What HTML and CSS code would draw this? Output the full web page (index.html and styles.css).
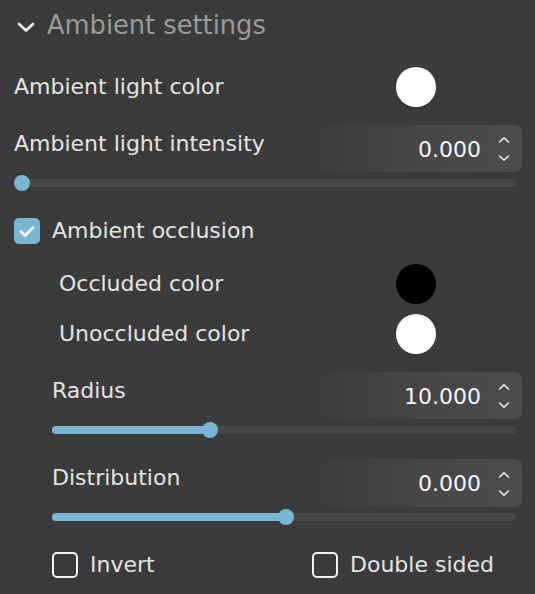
FILE: index.html
```html
<!DOCTYPE html>
<html>
<head>
<meta charset="utf-8">
<link rel="stylesheet" href="styles.css">
</head>
<body>
<div class="panel">
  <div class="header">
    <svg class="chev" width="18" height="12" viewBox="0 0 18 12"><path d="M2 3 L9 9.5 L16 3" fill="none" stroke="#ececec" stroke-width="2.8" stroke-linecap="round" stroke-linejoin="round"/></svg>
    <span class="title">Ambient settings</span>
  </div>

  <div class="color-row top-row">
    <span class="label">Ambient light color</span>
    <span class="swatch white"></span>
  </div>

  <div class="num-row">
    <span class="label">Ambient light intensity</span>
    <div class="numbox">
      <span class="value">0.000</span>
      <span class="spin">
        <svg width="12" height="26" viewBox="0 0 12 26"><path d="M1.5 6 L6 1.8 L10.5 6" fill="none" stroke="#e6e6e6" stroke-width="1.6" stroke-linecap="round" stroke-linejoin="round"/><path d="M1.5 20 L6 24.2 L10.5 20" fill="none" stroke="#e6e6e6" stroke-width="1.6" stroke-linecap="round" stroke-linejoin="round"/></svg>
      </span>
    </div>
  </div>
  <div class="slider"><div class="fill" style="width:0%"></div><div class="thumb" style="left:0%"></div></div>

  <div class="check-row main-check">
    <span class="cb checked"><svg width="26" height="26" viewBox="0 0 26 26"><path d="M7 13.5 L11.2 17.5 L19 9.5" fill="none" stroke="#f2f2f2" stroke-width="3" stroke-linecap="round" stroke-linejoin="round"/></svg></span>
    <span class="label">Ambient occlusion</span>
  </div>

  <div class="sub">
    <div class="color-row sub-color">
      <span class="label">Occluded color</span>
      <span class="swatch black"></span>
    </div>
    <div class="color-row sub-color second">
      <span class="label">Unoccluded color</span>
      <span class="swatch white"></span>
    </div>

    <div class="num-row sub-num">
      <span class="label">Radius</span>
      <div class="numbox">
        <span class="value">10.000</span>
        <span class="spin">
          <svg width="12" height="26" viewBox="0 0 12 26"><path d="M1.5 6 L6 1.8 L10.5 6" fill="none" stroke="#e6e6e6" stroke-width="1.6" stroke-linecap="round" stroke-linejoin="round"/><path d="M1.5 20 L6 24.2 L10.5 20" fill="none" stroke="#e6e6e6" stroke-width="1.6" stroke-linecap="round" stroke-linejoin="round"/></svg>
        </span>
      </div>
    </div>
    <div class="slider"><div class="fill" style="width:34%"></div><div class="thumb" style="left:34%"></div></div>

    <div class="num-row sub-num dist">
      <span class="label">Distribution</span>
      <div class="numbox">
        <span class="value">0.000</span>
        <span class="spin">
          <svg width="12" height="26" viewBox="0 0 12 26"><path d="M1.5 6 L6 1.8 L10.5 6" fill="none" stroke="#e6e6e6" stroke-width="1.6" stroke-linecap="round" stroke-linejoin="round"/><path d="M1.5 20 L6 24.2 L10.5 20" fill="none" stroke="#e6e6e6" stroke-width="1.6" stroke-linecap="round" stroke-linejoin="round"/></svg>
        </span>
      </div>
    </div>
    <div class="slider"><div class="fill" style="width:50.4%"></div><div class="thumb" style="left:50.4%"></div></div>

    <div class="bottom-checks">
      <div class="check-row">
        <span class="cb"></span>
        <span class="label">Invert</span>
      </div>
      <div class="check-row">
        <span class="cb"></span>
        <span class="label">Double sided</span>
      </div>
    </div>
  </div>
</div>
</body>
</html>
```

FILE: styles.css
```css
html, body {
  margin: 0;
  padding: 0;
  background: #3b3b3b;
}
body {
  font-family: "DejaVu Sans", Verdana, sans-serif;
  color: #e4e4e4;
}
.panel {
  width: 535px;
  height: 594px;
  box-sizing: border-box;
  padding: 0 13px 0 14px;
  overflow: hidden;
}
.header {
  height: 52px;
  display: flex;
  align-items: center;
  padding-left: 3px;
}
.chev {
  margin-right: 12px;
  margin-top: 1px;
}
.title {
  font-size: 25.7px;
  color: #9a9a9a;
  line-height: 1;
}
.label {
  font-size: 22px;
  line-height: 1;
  white-space: nowrap;
}
.color-row {
  display: flex;
  align-items: center;
  justify-content: space-between;
  height: 40px;
}
.top-row {
  margin-top: 15px;
}
.swatch {
  width: 40px;
  height: 40px;
  border-radius: 50%;
  margin-right: 86px;
}
.swatch.white { background: #ffffff; }
.swatch.black { background: #000000; }

.num-row {
  display: flex;
  justify-content: space-between;
  align-items: flex-start;
  height: 47px;
  margin-top: 18px;
}
.num-row .label {
  margin-top: 8px;
}
.numbox {
  width: 220px;
  height: 47px;
  border-radius: 7px;
  background: linear-gradient(to right, rgba(80,80,80,0) 0%, rgba(80,80,80,0.55) 55%, #4d4d4d 100%);
  display: flex;
  align-items: center;
  justify-content: flex-end;
  box-sizing: border-box;
  padding-right: 12px;
}
.value {
  font-size: 22px;
  color: #f4f4f4;
  line-height: 1;
  margin-right: 17px;
  margin-top: 2px;
}
.spin {
  display: flex;
  margin-top: 1px;
}
.slider {
  position: relative;
  height: 8px;
  border-radius: 4px;
  background: #474747;
  margin: 7px 6px 0 0;
}
.slider .fill {
  height: 8px;
  border-radius: 4px;
  background: #78b7d3;
}
.slider .thumb {
  position: absolute;
  top: -4px;
  width: 16px;
  height: 16px;
  border-radius: 50%;
  background: #78b7d3;
  margin-left: 0;
}
.check-row {
  display: flex;
  align-items: center;
}
.main-check {
  margin-top: 31px;
  height: 26px;
}
.cb {
  width: 26px;
  height: 26px;
  border-radius: 5px;
  box-sizing: border-box;
  border: 2px solid #f2f2f2;
  margin-right: 12px;
  display: flex;
  align-items: center;
  justify-content: center;
  flex-shrink: 0;
}
.cb.checked {
  border: none;
  background: #78b7d3;
}
.sub {
  padding-left: 38px;
}
.sub-color {
  margin-top: 20px;
}
.sub-color .label {
  padding-left: 7px;
}
.sub-color .swatch {
  margin-right: 86px;
}
.sub-color.second {
  margin-top: 10px;
}
.sub .slider .thumb {
  transform: translateX(-8px);
}
.sub-num {
  margin-top: 18px;
}
.sub-num.dist {
  margin-top: 25px;
  height: 48px;
}
.sub-num.dist .numbox {
  height: 48px;
}
.sub-num + .slider {
  margin-top: 7px;
}
.sub-num.dist + .slider {
  margin-top: 6px;
}
.bottom-checks {
  display: flex;
  margin-top: 31px;
}
.bottom-checks .check-row:first-child {
  width: 260px;
}
```
